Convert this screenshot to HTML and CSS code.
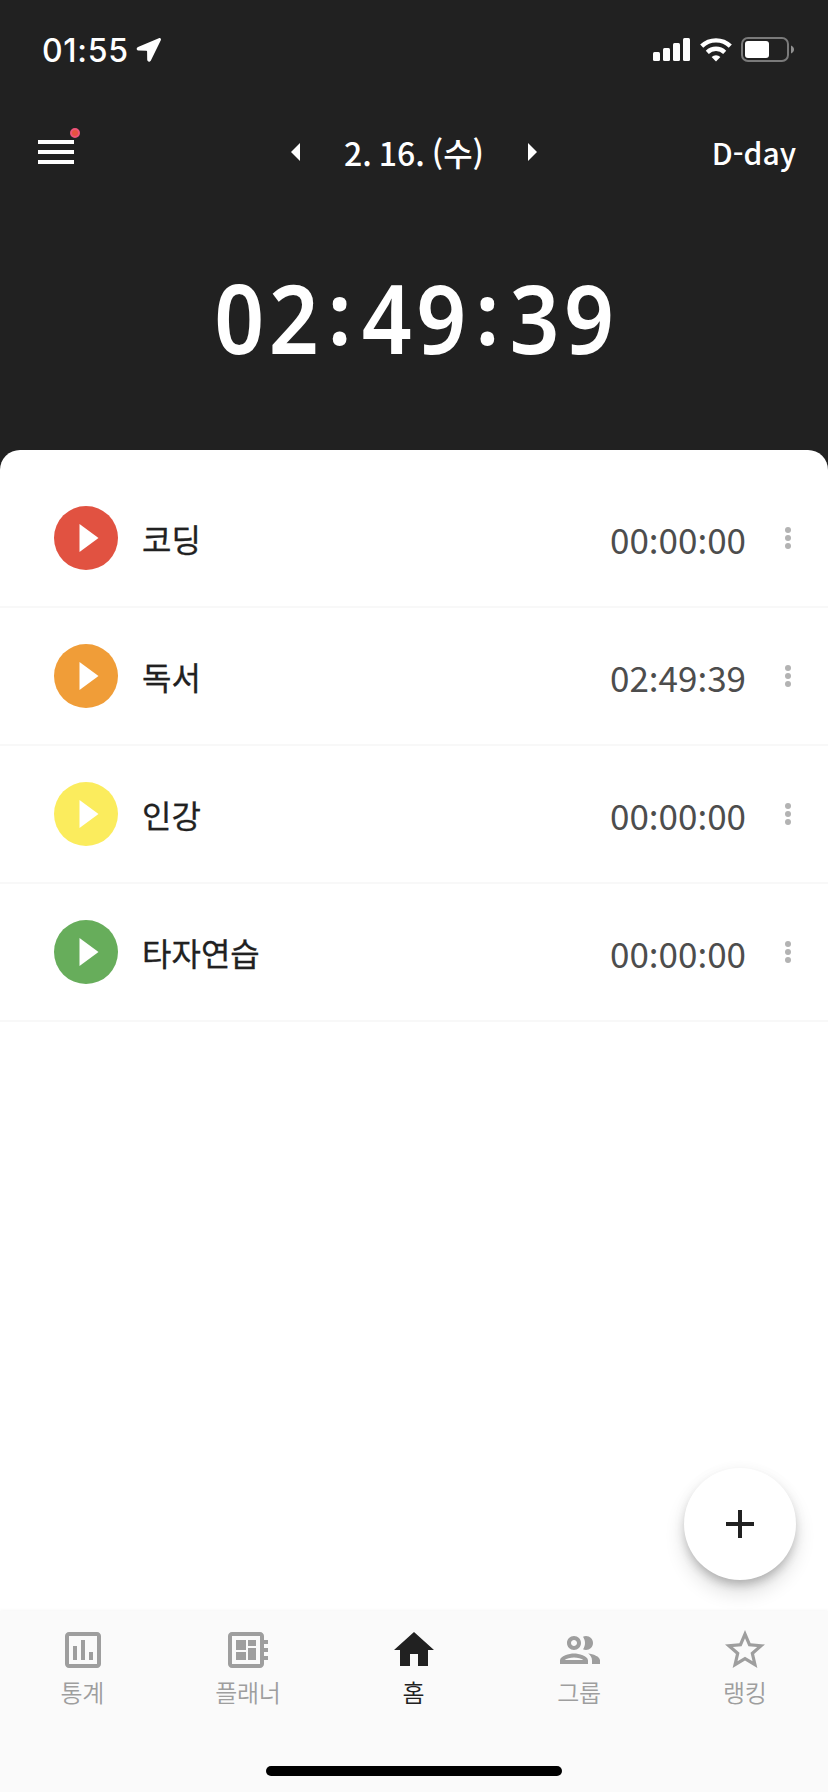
FILE: index.html
```html
<!DOCTYPE html>
<html lang="ko">
<head>
  <meta charset="UTF-8" />
  <title>공부 타이머</title>
  <meta name="viewport" content="width=device-width, initial-scale=1.0" />
  <link rel="stylesheet" href="styles.css">
</head>
<body>

<div class="app">
  <div class="statusbar">
    <div class="status-left">
      <span class="clock">01:55</span>
      <svg class="location" width="26" height="26" viewBox="0 0 26 26"><path d="M22.800 1.200 2 9.900c-2 .9-1.600 3.500.6 3.600l7.800.2c.4 0 .7.300.7.7l.1 8.200c.1 2.600 2.800 2.900 3.800.7L24.800 3.200c.7-1.500-.5-2.600-2-2z" fill="#fff"/></svg>
    </div>
    <div class="status-right">
      <svg width="38" height="24" viewBox="0 0 38 24" fill="#fff">
        <rect x="0" y="14" width="7" height="9" rx="1.500"/>
        <rect x="10" y="10" width="7" height="13" rx="1.500"/>
        <rect x="20" y="5" width="7" height="18" rx="1.500"/>
        <rect x="30" y="0" width="7" height="23" rx="1.500"/>
      </svg>
      <svg width="32" height="24" viewBox="0 0 32 24" fill="none" stroke="#fff">
        <path d="M1.700 8.200a20.500 20.500 0 0 1 28.600 0" stroke-width="4.400"/>
        <path d="M7.300 14.300a12.600 12.600 0 0 1 17.400 0" stroke-width="4.400"/>
        <path d="M11.600 19a6.600 6.600 0 0 1 8.800 0L16 23.500z" fill="#fff" stroke="none"/>
      </svg>
      <svg width="54" height="26" viewBox="0 0 54 26">
        <rect x="1" y="1" width="46" height="23" rx="6" fill="none" stroke="#7a7a7a" stroke-width="2"/>
        <rect x="4" y="4" width="24" height="17" rx="3" fill="#fff"/>
        <path d="M50 8.500c4 1.500 4 6.500 0 8z" fill="#909090"/>
      </svg>
    </div>
  </div>

  <header class="topbar">
    <button class="menu-btn">
      <span></span><span></span><span></span>
      <i class="badge"></i>
    </button>
    <div class="date-nav">
      <svg width="9" height="18" viewBox="0 0 9 18"><path d="M9 0v18L0 9z" fill="#fff"/></svg>
      <span class="date">2. 16. (수)</span>
      <svg width="9" height="18" viewBox="0 0 9 18"><path d="M0 0v18l9-9z" fill="#fff"/></svg>
    </div>
    <div class="dday">D-day</div>
  </header>

  <div class="total">
    <span>02</span><span class="colon">:</span><span>49</span><span class="colon">:</span><span>39</span>
  </div>

  <main class="sheet">
    <div class="row">
      <svg class="play red" viewBox="0 0 64 64"><circle cx="32" cy="32" r="32"/><path d="M25.500 18v28l19-14z" fill="#fff"/></svg>
      <span class="name">코딩</span>
      <span class="time" lang="en">00<b>:</b>00<b>:</b>00</span>
      <div class="more"><i></i><i></i><i></i></div>
    </div>
    <div class="row">
      <svg class="play orange" viewBox="0 0 64 64"><circle cx="32" cy="32" r="32"/><path d="M25.500 18v28l19-14z" fill="#fff"/></svg>
      <span class="name">독서</span>
      <span class="time" lang="en">02<b>:</b>49<b>:</b>39</span>
      <div class="more"><i></i><i></i><i></i></div>
    </div>
    <div class="row">
      <svg class="play yellow" viewBox="0 0 64 64"><circle cx="32" cy="32" r="32"/><path d="M25.500 18v28l19-14z" fill="#fff"/></svg>
      <span class="name">인강</span>
      <span class="time" lang="en">00<b>:</b>00<b>:</b>00</span>
      <div class="more"><i></i><i></i><i></i></div>
    </div>
    <div class="row">
      <svg class="play green" viewBox="0 0 64 64"><circle cx="32" cy="32" r="32"/><path d="M25.500 18v28l19-14z" fill="#fff"/></svg>
      <span class="name">타자연습</span>
      <span class="time" lang="en">00<b>:</b>00<b>:</b>00</span>
      <div class="more"><i></i><i></i><i></i></div>
    </div>
  </main>

  <button class="fab">
    <svg width="28" height="28" viewBox="0 0 28 28"><path d="M12 0h4v12h12v4H16v12h-4V16H0v-4h12z" fill="#212121"/></svg>
  </button>

  <footer class="bottom">
    <nav class="tabs">
      <a class="tab">
        <svg viewBox="0 0 24 24"><path d="M19 3H5c-1.100 0-2 .9-2 2v14c0 1.100.9 2 2 2h14c1.100 0 2-.9 2-2V5c0-1.100-.9-2-2-2zm0 16H5V5h14v14zM7 10h2v7H7zm4-3h2v10h-2zm4 6h2v4h-2z"/></svg>
        <span>통계</span>
      </a>
      <a class="tab">
        <svg viewBox="0 0 24 24"><path d="M22 9V7h-2V5c0-1.100-.9-2-2-2H4c-1.100 0-2 .9-2 2v14c0 1.100.9 2 2 2h14c1.100 0 2-.9 2-2v-2h2v-2h-2v-2h2v-2h-2V9h2zm-4 10H4V5h14v14zM6 13h5v4H6zm6-6h4v3h-4zM6 7h5v5H6zm6 4h4v6h-4z"/></svg>
        <span>플래너</span>
      </a>
      <a class="tab active">
        <svg viewBox="0 0 24 24"><path d="M10 20v-6h4v6h5v-8h3L12 3 2 12h3v8z"/></svg>
        <span>홈</span>
      </a>
      <a class="tab">
        <svg viewBox="0 0 24 24"><path d="M9 13.750c-2.340 0-7 1.170-7 3.500V19h14v-1.750c0-2.330-4.660-3.500-7-3.500zM4.340 17c.84-.58 2.870-1.250 4.660-1.250s3.820.67 4.660 1.250H4.340zM9 12c1.930 0 3.500-1.570 3.500-3.500S10.930 5 9 5 5.500 6.570 5.500 8.500 7.070 12 9 12zm0-5c.83 0 1.500.67 1.500 1.500S9.830 10 9 10s-1.500-.67-1.500-1.500S8.170 7 9 7zm7.040 6.810c1.160.84 1.960 1.960 1.960 3.440V19h4v-1.750c0-2.020-3.500-3.170-5.960-3.440zM15 12c1.930 0 3.500-1.570 3.500-3.500S16.930 5 15 5c-.54 0-1.040.13-1.500.35.63.89 1 1.980 1 3.150s-.37 2.260-1 3.150c.46.22.96.35 1.500.35z"/></svg>
        <span>그룹</span>
      </a>
      <a class="tab">
        <svg viewBox="0 0 24 24"><path d="M22 9.240l-7.190-.62L12 2 9.190 8.630 2 9.240l5.460 4.730L5.820 21 12 17.270 18.180 21l-1.630-7.030L22 9.240zM12 15.400l-3.760 2.270 1-4.280-3.320-2.880 4.380-.38L12 6.100l1.710 4.040 4.380.38-3.320 2.880 1 4.280L12 15.400z"/></svg>
        <span>랭킹</span>
      </a>
    </nav>
    <div class="home-bar"></div>
  </footer>
</div>

</body>
</html>
```
FILE: styles.css
```css
* {
  box-sizing: border-box;
}
body {
  margin: 0;
  background: #212121;
  font-family: "Noto Sans CJK KR", sans-serif;
}
button {
  border: none;
  background: none;
  padding: 0;
  cursor: pointer;
}
svg {
  display: block;
  flex-shrink: 0;
}
.app {
  position: relative;
  width: 828px;
  height: 1792px;
  display: flex;
  flex-direction: column;
  overflow: hidden;
}

/* status bar */
.statusbar {
  height: 100px;
  padding: 0 33px 0 42px;
  display: flex;
  align-items: center;
  justify-content: space-between;
}
.status-left {
  display: flex;
  align-items: center;
  gap: 7px;
}
.clock {
  font-family: Inter, sans-serif;
  font-size: 32px;
  font-weight: 500;
  letter-spacing: 0.7px;
  color: #fff;
}
.status-right {
  display: flex;
  align-items: center;
  gap: 9px;
}

/* header */
.topbar {
  height: 104px;
  padding: 0 32px;
  display: grid;
  grid-template-columns: 1fr auto 1fr;
  align-items: center;
  color: #fff;
  font-size: 32px;
  font-weight: 500;
}
.menu-btn {
  position: relative;
  width: 36px;
  margin-left: 6px;
  display: flex;
  flex-direction: column;
  gap: 6px;
}
.menu-btn span {
  height: 4px;
  background: #fff;
}
.badge {
  position: absolute;
  top: -12px;
  right: -6px;
  width: 10px;
  height: 10px;
  border-radius: 50%;
  background: #e6533f;
  border: 2px solid #ee5377;
}
.date-nav {
  display: flex;
  align-items: center;
  gap: 44px;
}
.date {
  word-spacing: -2px;
}
.dday {
  text-align: right;
  font-size: 30px;
}

.total {
  height: 246px;
  padding: 0 0 20px 5px;
  display: flex;
  justify-content: center;
  align-items: center;
  font-family: "Noto Sans", sans-serif;
  font-size: 95px;
  font-weight: 600;
  letter-spacing: 4.9px;
  color: #fff;
  transform: scaleX(0.92);
}
.colon {
  width: 42px;
  margin-left: -3px;
  margin-right: 3px;
  padding-bottom: 12px;
  text-align: center;
  font-size: 86px;
  font-weight: 700;
  letter-spacing: 0;
}

/* subject list */
.sheet {
  flex: 1;
  padding-top: 20px;
  background: #fff;
  border-radius: 20px 20px 0 0;
}
.row {
  height: 138px;
  padding: 0 37px 0 54px;
  display: flex;
  align-items: center;
  border-bottom: 2px solid #f8f8f8;
}
.play {
  width: 64px;
  height: 64px;
}
.red { fill: #e15241; }
.orange { fill: #f09d38; }
.yellow { fill: #fbec5d; }
.green { fill: #67ad5b; }
.name {
  flex: 1;
  margin-left: 24px;
  font-size: 32px;
  color: #212121;
  -webkit-text-stroke: 0.3px #212121;
}
.time {
  font-family: "Noto Sans CJK JP", sans-serif;
  font-size: 35px;
  color: #4d4d4d;
}
/* keeps the colon on the baseline between digits */
.time b {
  display: inline-block;
  font-weight: 400;
  font-feature-settings: "locl" 0, "calt" 0;
}
.more {
  margin-left: 39px;
  display: flex;
  flex-direction: column;
  gap: 2px;
}
.more i {
  width: 6px;
  height: 6px;
  border-radius: 50%;
  background: #b3b3b3;
}

.fab {
  position: absolute;
  right: 32px;
  bottom: 212px;
  width: 112px;
  height: 112px;
  border-radius: 50%;
  background: #fff;
  display: flex;
  align-items: center;
  justify-content: center;
  box-shadow: 0 6px 10px -2px rgba(0,0,0,0.2), 0 12px 20px rgba(0,0,0,0.14), 0 2px 16px rgba(0,0,0,0.04);
}

/* bottom tabs */
.bottom {
  height: 181px;
  padding-top: 15px;
  background: #fafafa;
  box-shadow: 0 -1px 3px rgba(0,0,0,0.04);
  display: flex;
  flex-direction: column;
  align-items: center;
  justify-content: space-between;
  padding-bottom: 16px;
}
.tabs {
  width: 100%;
  display: grid;
  grid-template-columns: repeat(5, 1fr);
}
.tab {
  display: flex;
  flex-direction: column;
  align-items: center;
  font-size: 24px;
  font-weight: 350;
  line-height: 36px;
  letter-spacing: -0.3px;
  color: #9e9e9e;
  fill: #9e9e9e;
}
.tab svg {
  width: 48px;
  height: 48px;
}
.tab span {
  margin-right: 1px;
}
.tab.active {
  color: #212121;
  fill: #212121;
}
.home-bar {
  width: 296px;
  height: 10px;
  border-radius: 5px;
  background: #000;
}
```
